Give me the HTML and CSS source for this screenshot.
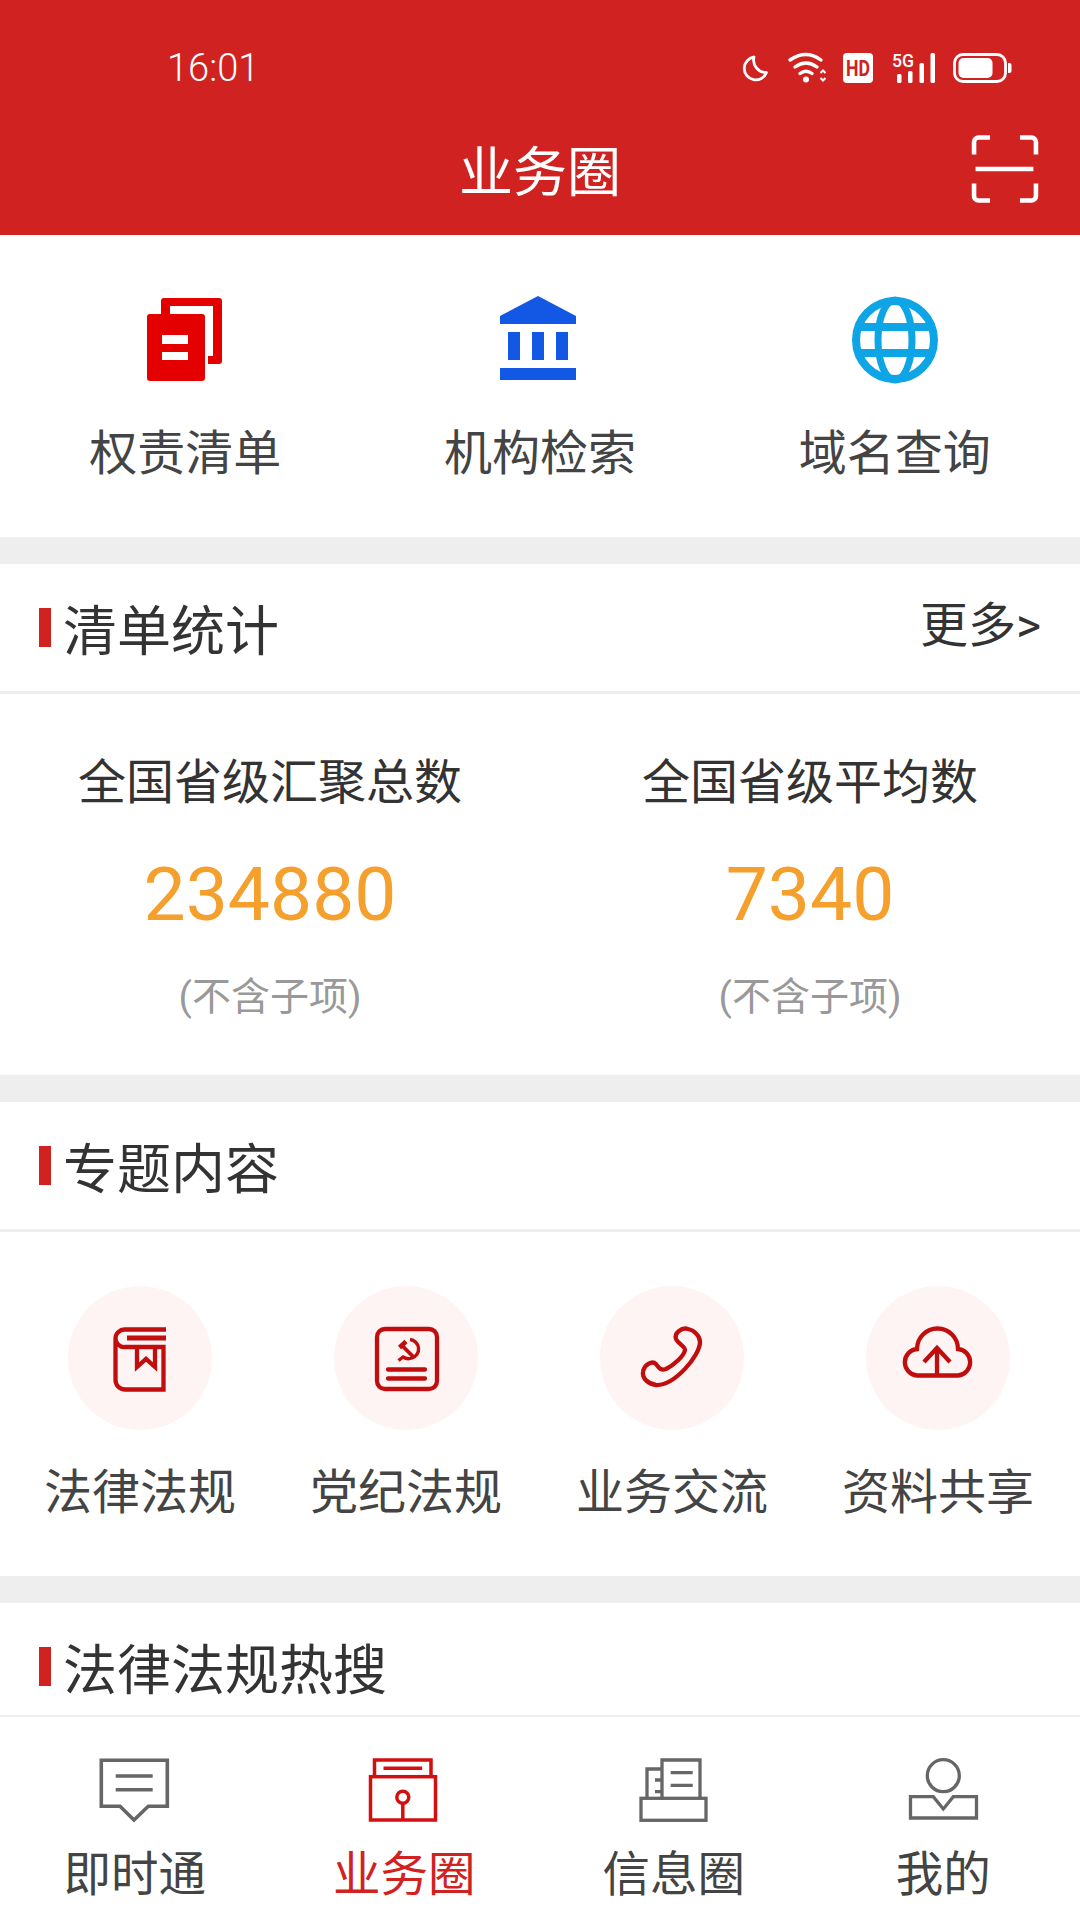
FILE: index.html
```html
<!DOCTYPE html>
<html lang="zh-CN">
<head>
  <meta charset="UTF-8">
  <meta name="viewport" content="width=device-width, initial-scale=1.0">
  <title>业务圈</title>
  <link rel="stylesheet" href="styles.css">
</head>
<body>

<div class="page">
  <header class="header">
    <div class="status-bar">
      <span class="time">16:01</span>
      <div class="status-icons">
        <svg class="si-moon" width="25" height="30" viewBox="0 0 25 30"><path d="M11 4A11.5 11.5 0 1 0 23.500 19.500A12.500 12.500 0 0 1 11 4Z" fill="none" stroke="#fff" stroke-width="2.800" stroke-linejoin="round"/></svg>
        <svg class="si-wifi" width="39" height="30" viewBox="0 0 39 30">
          <g fill="none" stroke="#fff" stroke-width="3.400" stroke-linecap="round">
            <path d="M2 7Q18 -4 33 7"/>
            <path d="M7 14Q18 6 29 14"/>
            <path d="M12 20.500Q18 16 24 20.500"/>
          </g>
          <circle cx="18" cy="26.500" r="3" fill="#fff"/>
          <path d="M32.500 20L35 17.500L37.500 20M32.500 25L35 27.500L37.500 25" fill="none" stroke="#fff" stroke-width="2"/>
        </svg>
        <svg class="si-hd" width="30" height="30" viewBox="0 0 30 30">
          <rect width="30" height="30" rx="4" fill="#fff"/>
          <text x="3" y="22.500" class="si-hd-text" textLength="24" lengthAdjust="spacingAndGlyphs">HD</text>
        </svg>
        <svg class="si-signal" width="43" height="30" viewBox="0 0 43 30">
          <text x="0" y="13.500" class="si-5g" textLength="22" lengthAdjust="spacingAndGlyphs">5G</text>
          <rect x="5" y="21" width="4.500" height="9" rx="1.500" fill="#fff"/>
          <rect x="16" y="18" width="4.500" height="12" rx="1.500" fill="#fff"/>
          <rect x="27.500" y="10" width="4.500" height="20" rx="1.500" fill="#fff"/>
          <rect x="38.500" y="0" width="4.500" height="30" rx="1.500" fill="#fff"/>
        </svg>
        <svg class="si-battery" width="59" height="30" viewBox="0 0 59 30">
          <rect x="1.500" y="1.500" width="51" height="27" rx="8.500" fill="none" stroke="#fff" stroke-width="2.800"/>
          <rect x="5.500" y="5" width="34" height="20" rx="5" fill="#fff"/>
          <path d="M55 10h1.500a2 2 0 0 1 2 2v6a2 2 0 0 1-2 2H55Z" fill="#fff"/>
        </svg>
      </div>
    </div>
    <div class="title-bar">
      <span></span>
      <h1 class="title">业务圈</h1>
      <svg class="scan" width="68" height="68" viewBox="0 0 66 67">
        <g fill="none" stroke="#fff" stroke-width="4.500" stroke-linecap="square">
          <path d="M2.500 17V7a4.500 4.500 0 0 1 4.500-4.500H16"/>
          <path d="M50 2.500H59a4.500 4.500 0 0 1 4.500 4.500V17"/>
          <path d="M2.500 50V60a4.500 4.500 0 0 0 4.500 4.500H16"/>
          <path d="M50 64.500H59a4.500 4.500 0 0 0 4.500-4.500V50"/>
          <path d="M4 33.500H61" stroke-linecap="butt"/>
        </g>
      </svg>
    </div>
  </header>

  <main class="content">
    <section class="shortcuts">
      <div class="shortcut">
        <svg class="shortcut-icon" width="88" height="88" viewBox="1 0 88 88">
          <path fill="#e50000" d="M24 2h55a3 3 0 0 1 3 3v60a3 3 0 0 1-3 3h-11v-8h5V10H30v8h-9V5a3 3 0 0 1 3-3Z"/>
          <path fill="#e50000" fill-rule="evenodd" d="M10 18h52a3 3 0 0 1 3 3v61a3 3 0 0 1-3 3H10a3 3 0 0 1-3-3V21a3 3 0 0 1 3-3ZM22 39v9h26v-9ZM22 56v8h26v-8Z"/>
        </svg>
        <span class="shortcut-label">权责清单</span>
      </div>
      <div class="shortcut">
        <svg class="shortcut-icon" width="88" height="88" viewBox="0 0 88 88">
          <g fill="#1358e5">
            <path d="M42 0L80 20V28H4V20Z"/>
            <rect x="12" y="36" width="12" height="28"/>
            <rect x="36" y="36" width="12" height="28"/>
            <rect x="60" y="36" width="12" height="28"/>
            <rect x="4" y="72" width="76" height="12"/>
          </g>
        </svg>
        <span class="shortcut-label">机构检索</span>
      </div>
      <div class="shortcut">
        <svg class="shortcut-icon" width="88" height="88" viewBox="0 0 88 88">
          <g fill="none" stroke="#0ea5e6">
            <circle cx="44" cy="44" r="39" stroke-width="8"/>
            <ellipse cx="44" cy="44" rx="17" ry="40" stroke-width="7"/>
            <path d="M6 31H82M6 57H82" stroke-width="8"/>
          </g>
        </svg>
        <span class="shortcut-label">域名查询</span>
      </div>
    </section>

    <section class="block">
      <div class="section-head">
        <span class="section-mark"></span>
        <h2 class="section-title">清单统计</h2>
        <span class="more">更多&gt;</span>
      </div>
      <div class="stats">
        <div class="stat">
          <div class="stat-label">全国省级汇聚总数</div>
          <div class="stat-value">234880</div>
          <div class="stat-note">(不含子项)</div>
        </div>
        <div class="stat">
          <div class="stat-label">全国省级平均数</div>
          <div class="stat-value">7340</div>
          <div class="stat-note">(不含子项)</div>
        </div>
      </div>
    </section>

    <section class="block">
      <div class="section-head">
        <span class="section-mark"></span>
        <h2 class="section-title">专题内容</h2>
      </div>
      <div class="topics">
        <div class="topic">
          <div class="topic-circle">
            <svg width="80" height="80" viewBox="0 0 80 80">
              <g fill="none" stroke="#c00d0d" stroke-width="4.300">
                <path d="M66 11.500H25a9 9 0 0 0-9.500 9V62a9.500 9.500 0 0 0 9.500 9.500H63.500V29H25a8.800 8.800 0 0 1-9.500-8.500"/>
                <path d="M27 20H66" stroke-width="5"/>
                <path d="M37 29V49L46 41L55 49V29"/>
              </g>
            </svg>
          </div>
          <span class="topic-label">法律法规</span>
        </div>
        <div class="topic">
          <div class="topic-circle">
            <svg width="80" height="80" viewBox="0 0 80 80">
              <g fill="none" stroke="#c00d0d">
                <rect x="11" y="11" width="60" height="60" rx="8" stroke-width="4.300"/>
                <path d="M22 51.500H59M22 60.500H59" stroke-width="4.300" stroke-linecap="round"/>
                <path d="M44 21.500a9.500 9.500 0 0 1 2 18.500a10 10 0 0 1-9-1L32.500 42.500" stroke-width="3.400"/>
                <path d="M36.500 28L47 38.500" stroke-width="3.800"/>
                <path d="M33.500 29.500L40 23.500" stroke-width="4.500"/>
              </g>
            </svg>
          </div>
          <span class="topic-label">党纪法规</span>
        </div>
        <div class="topic">
          <div class="topic-circle">
            <svg width="80" height="80" viewBox="0 0 80 80">
              <path d="M44 21C42 15 50 9 56 11C62 12 68 18 68 24C68 38 42 68 24 67C16 66 10 60 11 54C12 47 20 42 24 46C27 50 29 53 34 51C42 47 52 38 53 32C53 28 46 26 44 21Z" fill="none" stroke="#c00d0d" stroke-width="4.300" stroke-linejoin="round"/>
            </svg>
          </div>
          <span class="topic-label">业务交流</span>
        </div>
        <div class="topic">
          <div class="topic-circle">
            <svg width="80" height="80" viewBox="0 0 80 80">
              <g fill="none" stroke="#c00d0d" stroke-width="4.300">
                <path d="M19 57.500A13.300 13.300 0 0 1 19 31A20.500 20.500 0 0 1 60 31A13.300 13.300 0 0 1 60 57.500Z"/>
                <path d="M39 57V29"/>
                <path d="M26 44L39 30L52 44"/>
              </g>
            </svg>
          </div>
          <span class="topic-label">资料共享</span>
        </div>
      </div>
    </section>

    <section class="block">
      <div class="section-head">
        <span class="section-mark"></span>
        <h2 class="section-title">法律法规热搜</h2>
      </div>
    </section>
  </main>

  <nav class="tabbar">
    <div class="tab">
      <svg width="80" height="70" viewBox="0 0 80 70">
        <g fill="none" stroke="#666" stroke-width="3.600">
          <path d="M6.300 5.300H72.300V51.300H53.300L39 65L25 51.300H6.300Z"/>
          <path d="M20.700 21H57.700M20.700 34.700H57.700"/>
        </g>
      </svg>
      <span class="tab-label">即时通</span>
    </div>
    <div class="tab tab-active">
      <svg width="80" height="70" viewBox="-0.500 0 80 70">
        <g fill="none" stroke="#d40f0f" stroke-width="3.500">
          <path d="M10 21.700V5H66.500V21.700"/>
          <rect x="6" y="21.700" width="65" height="43.300"/>
          <path d="M19 13.300H57.700"/>
          <circle cx="38.300" cy="42.300" r="6"/>
          <path d="M38.300 48V65"/>
        </g>
      </svg>
      <span class="tab-label">业务圈</span>
    </div>
    <div class="tab">
      <svg width="80" height="70" viewBox="-1 0 80 70">
        <g fill="none" stroke="#666" stroke-width="3.300">
          <rect x="6" y="43.300" width="65" height="22"/>
          <path d="M27 43V5H65V43"/>
          <path d="M27 14H12V43"/>
          <path d="M35.700 17.700H57.700M35.700 30.300H57.700"/>
          <path d="M20 25H27M20 36.700H27"/>
        </g>
      </svg>
      <span class="tab-label">信息圈</span>
    </div>
    <div class="tab">
      <svg width="80" height="70" viewBox="-2 0 80 70">
        <g fill="none" stroke="#666" stroke-width="3.300">
          <circle cx="38.300" cy="20.700" r="16"/>
          <path d="M5.500 41.700H28.300L38.300 54L48.300 41.700H71.500V63H5.500Z"/>
        </g>
      </svg>
      <span class="tab-label">我的</span>
    </div>
  </nav>
</div>

</body>
</html>
```

FILE: styles.css
```css
* {
  box-sizing: border-box;
}
body {
  margin: 0;
  padding: 0;
  background-color: #fff;
  font-family: Roboto, "Noto Sans CJK SC", sans-serif;
  color: #333;
}
.page {
  display: flex;
  flex-direction: column;
  width: 1080px;
  height: 1920px;
  overflow: hidden;
}

/* header */
.header {
  height: 235px;
  padding-top: 53px;
  background-color: #d12222;
  color: #fff;
}
.status-bar {
  display: flex;
  justify-content: space-between;
  align-items: center;
  height: 30px;
  padding: 0 68px 0 167px;
}
.time {
  font-size: 38px;
  font-weight: 300;
  line-height: 30px;
}
.status-icons {
  display: flex;
  align-items: center;
}
.status-icons svg {
  display: block;
  overflow: visible;
}
.si-wifi {
  margin-left: 20px;
}
.si-hd {
  margin-left: 16px;
}
.si-signal {
  margin-left: 19px;
}
.si-battery {
  margin-left: 18px;
}
.si-hd-text {
  font-family: Roboto, sans-serif;
  font-size: 22px;
  font-weight: 700;
  fill: #d12222;
}
.si-5g {
  font-family: Roboto, sans-serif;
  font-size: 19px;
  font-weight: 500;
  fill: #fff;
}
.title-bar {
  display: grid;
  grid-template-columns: 1fr auto 1fr;
  align-items: center;
  height: 68px;
  margin-top: 52px;
  padding-right: 41px;
}
.title {
  margin: 0;
  padding: 10px 0 0 41px;
  font-size: 54px;
  font-weight: 400;
  line-height: 58px;
}
.scan {
  display: block;
  justify-self: end;
}

/* scrolling part */
.content {
  flex: 1;
  overflow: hidden;
  background-color: #eee;
}
.shortcuts {
  display: grid;
  grid-template-columns: repeat(3, 1fr);
  height: 302px;
  padding: 61px 8px 0;
  background-color: #fff;
}
.shortcut {
  display: flex;
  flex-direction: column;
  align-items: center;
}
.shortcut-icon {
  display: block;
}
.shortcut-label {
  margin-top: 40px;
  font-size: 48px;
  line-height: 60px;
  color: #444;
}
.block {
  margin-top: 27px;
  background-color: #fff;
}
.section-head {
  display: flex;
  align-items: center;
  height: 130px;
  padding: 0 39px;
  border-bottom: 3px solid #eee;
}
.section-mark {
  width: 12px;
  height: 39px;
  margin-right: 12px;
  background-color: #d12222;
}
.section-title {
  margin: 0;
  padding-top: 11px;
  font-size: 54px;
  font-weight: 400;
  line-height: 60px;
  color: #333;
}
.more {
  margin-left: auto;
  padding-bottom: 4px;
  font-size: 48px;
  line-height: 60px;
  color: #333;
}

/* stats */
.stats {
  display: grid;
  grid-template-columns: 1fr 1fr;
  height: 381px;
  padding-top: 59px;
  text-align: center;
}
.stat-label {
  font-size: 48px;
  line-height: 60px;
  color: #333;
}
.stat-value {
  margin-top: 36px;
  font-size: 75px;
  line-height: 90px;
  color: #f5a02c;
}
.stat-note {
  margin-top: 33px;
  font-size: 39px;
  line-height: 50px;
  color: #999;
}

/* topics */
.topics {
  display: grid;
  grid-template-columns: repeat(4, 1fr);
  height: 344px;
  padding: 54px 9px 0 7px;
}
.topic {
  display: flex;
  flex-direction: column;
  align-items: center;
}
.topic-circle {
  display: flex;
  justify-content: center;
  align-items: center;
  width: 144px;
  height: 144px;
  border-radius: 50%;
  background-color: #fef4f4;
}
.topic-label {
  margin-top: 33px;
  font-size: 48px;
  line-height: 60px;
  color: #444;
}

/* bottom tabs */
.tabbar {
  display: grid;
  grid-template-columns: repeat(4, 1fr);
  height: 205px;
  padding: 38px 2px 0 0;
  border-top: 2px solid #eee;
  background-color: #fff;
}
.tab {
  display: flex;
  flex-direction: column;
  align-items: center;
}
.tab svg {
  display: block;
}
.tab-label {
  margin-top: 20px;
  font-size: 47.500px;
  line-height: 60px;
  color: #444;
}
.tab-active .tab-label {
  color: #d12222;
}
```
